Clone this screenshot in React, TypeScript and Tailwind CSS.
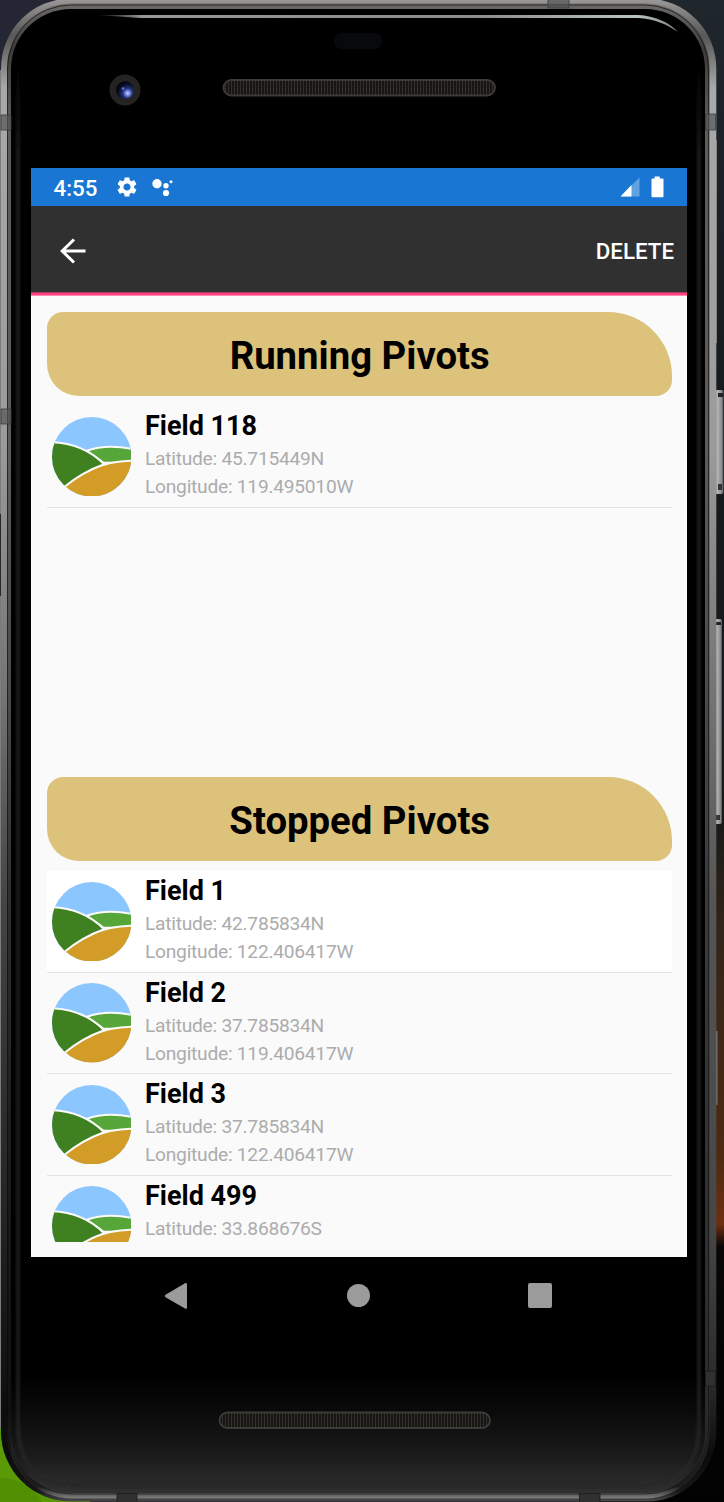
import React from "react";

type Field = { name: string; lat: string; lon?: string };

const running: Field[] = [{ name: "Field 118", lat: "45.715449N", lon: "119.495010W" }];

const stopped: Field[] = [
  { name: "Field 1", lat: "42.785834N", lon: "122.406417W" },
  { name: "Field 2", lat: "37.785834N", lon: "119.406417W" },
  { name: "Field 3", lat: "37.785834N", lon: "122.406417W" },
  { name: "Field 499", lat: "33.868676S" },
];

/** Drawing of the handset: wallpaper edges, metal rim, camera and speakers. */
function Handset() {
  return (
    <svg className="absolute inset-0" width="724" height="1502" viewBox="0 0 724 1502" aria-hidden="true">
      <defs>
        <linearGradient id="wallRight" x1="0" y1="0" x2="0" y2="1">
          <stop offset="0" stopColor="#1f262c" />
          <stop offset="0.3" stopColor="#151a1e" />
          <stop offset="0.54" stopColor="#171918" />
          <stop offset="0.62" stopColor="#33251a" />
          <stop offset="0.77" stopColor="#4d2a12" />
          <stop offset="0.815" stopColor="#6e2f10" />
          <stop offset="0.83" stopColor="#080607" />
          <stop offset="1" stopColor="#020202" />
        </linearGradient>
        <linearGradient id="rim" x1="0" y1="0" x2="0" y2="1">
          <stop offset="0" stopColor="#9c9a99" />
          <stop offset="0.025" stopColor="#585756" />
          <stop offset="0.06" stopColor="#a9a9a9" />
          <stop offset="0.3" stopColor="#9a9a9a" />
          <stop offset="0.45" stopColor="#777" />
          <stop offset="0.6" stopColor="#555" />
          <stop offset="0.82" stopColor="#464646" />
          <stop offset="0.92" stopColor="#2b2b2b" />
          <stop offset="0.97" stopColor="#0c0c0c" />
          <stop offset="0.993" stopColor="#161616" />
          <stop offset="1" stopColor="#4a4a4a" />
        </linearGradient>
        <linearGradient id="rimInner" x1="0" y1="0" x2="0" y2="1">
          <stop offset="0" stopColor="#6d6a68" />
          <stop offset="0.03" stopColor="#3c3b3a" />
          <stop offset="0.08" stopColor="#5c5c5c" />
          <stop offset="0.3" stopColor="#5c5c5c" />
          <stop offset="0.6" stopColor="#3b3b3b" />
          <stop offset="0.94" stopColor="#2b2b2b" />
          <stop offset="0.992" stopColor="#1c1c1c" />
          <stop offset="1" stopColor="#808080" />
        </linearGradient>
        <linearGradient id="leftShade" x1="0" y1="0" x2="0" y2="1">
          <stop offset="0.45" stopColor="#000" stopOpacity="0" />
          <stop offset="0.85" stopColor="#000" stopOpacity="0.55" />
          <stop offset="0.95" stopColor="#000" stopOpacity="0.6" />
          <stop offset="1" stopColor="#000" stopOpacity="0" />
        </linearGradient>
        <clipPath id="body">
          <rect x="1" y="-1.5" width="715.3" height="1503" rx="70" />
        </clipPath>
        <linearGradient id="glass" x1="0" y1="0" x2="0" y2="1">
          <stop offset="0.92" stopColor="#000" />
          <stop offset="0.945" stopColor="#0a0a0a" />
          <stop offset="0.975" stopColor="#1b1b1b" />
          <stop offset="1" stopColor="#303030" />
        </linearGradient>
        <linearGradient id="edgeGlow" gradientUnits="userSpaceOnUse" x1="0" y1="60" x2="0" y2="1486">
          <stop offset="0" stopColor="#222" stopOpacity="0" />
          <stop offset="0.07" stopColor="#222" />
          <stop offset="1" stopColor="#262626" />
        </linearGradient>
        <linearGradient id="shine" x1="0" y1="0" x2="1" y2="0">
          <stop offset="0" stopColor="#999" stopOpacity="0" />
          <stop offset="0.08" stopColor="#96989a" />
          <stop offset="0.65" stopColor="#8b8b8b" />
          <stop offset="0.93" stopColor="#bac3c4" />
          <stop offset="1" stopColor="#7d8383" />
        </linearGradient>
        <linearGradient id="button" x1="0" y1="0" x2="1" y2="0">
          <stop offset="0" stopColor="#777" />
          <stop offset="0.35" stopColor="#b5b5b5" />
          <stop offset="0.8" stopColor="#8b8b8b" />
          <stop offset="1" stopColor="#4e4e4e" />
        </linearGradient>
        <radialGradient id="lens" cx="0.65" cy="0.68" r="0.65">
          <stop offset="0" stopColor="#d0d8ff" />
          <stop offset="0.2" stopColor="#7486da" />
          <stop offset="0.42" stopColor="#22337c" />
          <stop offset="0.8" stopColor="#080c22" />
          <stop offset="1" stopColor="#05070f" />
        </radialGradient>
        <pattern id="mesh" width="3" height="2" patternUnits="userSpaceOnUse">
          <rect width="3" height="2" fill="#171613" />
          <rect width="1" height="1" fill="#383632" />
          <rect y="1" width="1" height="1" fill="#2c2a26" />
        </pattern>
        <filter id="soft" x="-20%" y="-20%" width="140%" height="140%">
          <feGaussianBlur stdDeviation="1.6" />
        </filter>
      </defs>

      <rect width="724" height="1502" fill="#171c21" />
      <rect width="90" height="70" fill="#242733" />
      <rect y="70" width="4" height="1358" fill="#7a7d80" />
      <rect y="514" width="3" height="82" fill="#25292d" />
      <rect x="600" width="124" height="1502" fill="url(#wallRight)" />
      <rect y="1428" width="90" height="74" fill="#5a9a06" />
      <path d="M0 1478q18 0 34 12l8 12H0z" fill="#4b8902" opacity="0.6" />

      <rect x="714" y="390" width="9.5" height="104" rx="2" fill="url(#button)" />
      <rect x="718" y="393" width="5" height="4" fill="#222" />
      <rect x="718" y="484" width="4" height="6" fill="#333" />
      <rect x="714" y="619" width="8" height="205" rx="2" fill="url(#button)" />
      <rect x="716" y="622" width="5" height="3" fill="#222" />
      <rect x="716" y="815" width="4" height="5" fill="#333" />
      <rect x="716" y="140" width="1" height="203" fill="#777" />
      <rect x="716" y="1031" width="1.5" height="74" fill="#777" />

      <rect x="1" y="-1.5" width="715.3" height="1503" rx="70" fill="url(#rim)" />
      <rect x="7" y="3.5" width="702.5" height="1495" rx="65" fill="url(#rimInner)" />
      <rect x="7.5" y="5" width="701" height="1489" rx="64" fill="none" stroke="#161616" strokeWidth="1" opacity="0.75" />
      <path d="M1 70H11V1480H1z" fill="url(#leftShade)" clipPath="url(#body)" />
      <rect x="11" y="9" width="694" height="1484" rx="60" fill="url(#glass)" />
      <path
        d="M18 60V1425Q18 1485 80 1485H640Q699 1485 699 1425V60"
        fill="none"
        stroke="url(#edgeGlow)"
        strokeWidth="3"
        filter="url(#soft)"
      />

      <path d="M96 15H638C655 16 669 22 678 32C666 24 655 19 638 18H140z" fill="url(#shine)" />

      <g fill="#555" fillOpacity="0.7" stroke="#3d3d3d" strokeWidth="0.8">
        <rect x="1" y="115" width="10" height="15" />
        <rect x="1" y="409" width="10" height="15" />
        <rect x="705.5" y="114" width="10" height="16" />
        <rect x="548" y="-1" width="21" height="9" />
      </g>
      <g fill="#303030" stroke="#1c1c1c" strokeWidth="0.8">
        <rect x="117" y="1493.5" width="20" height="9" />
        <rect x="579.5" y="1493.5" width="20.5" height="9" />
        <rect x="705.5" y="1371" width="10" height="15" />
      </g>

      <rect x="334" y="33" width="48.5" height="16" rx="8" fill="#08090c" />
      <circle cx="125" cy="90" r="15.5" fill="#242322" />
      <circle cx="125" cy="90" r="14" fill="none" stroke="#2b2928" strokeDasharray="1.5 1.5" />
      <circle cx="125" cy="90" r="9" fill="url(#lens)" />
      <circle cx="123" cy="88.5" r="1.3" fill="#5f76c4" />

      <rect x="223.5" y="80" width="271.5" height="15.5" rx="7.75" fill="url(#mesh)" stroke="#3d3b39" strokeWidth="1.8" />
      <rect x="219.5" y="1412.5" width="270.5" height="15.5" rx="7.75" fill="url(#mesh)" stroke="#3d3b39" strokeWidth="1.8" />
    </svg>
  );
}

function FieldIcon({ id }: { id: string }) {
  return (
    <svg className="mt-[10.5px] ml-[4.3px] h-[79.5px] w-[79.5px] shrink-0" viewBox="0 0 80 80" aria-hidden="true">
      <clipPath id={id}>
        <circle cx="40" cy="40" r="40" />
      </clipPath>
      <g clipPath={`url(#${id})`}>
        <rect width="80" height="80" fill="#8cc6ff" />
        <path d="M35 34C49 29 65 29 82 32.5V46H52z" fill="#57a639" stroke="#fafafa" strokeWidth="2" />
        <path d="M10 71.5C27 58 48 43.5 83 44V83H10z" fill="#d39c26" stroke="#fafafa" strokeWidth="2" />
        <path d="M-2 25.3C19 25.5 38 33 52.5 47.5C37 53 25 60 13 70L-2 82z" fill="#3f8021" stroke="#fafafa" strokeWidth="2" />
      </g>
    </svg>
  );
}

function FieldRow({ field, id, selected }: { field: Field; id: string; selected?: boolean }) {
  return (
    <div className={`flex h-[101.5px] shrink-0 border-b border-[#e4e4e4] ${selected ? "bg-white" : ""}`}>
      <FieldIcon id={id} />
      <div className="ml-[13.8px] pt-[4px] whitespace-nowrap">
        <div className="text-[27px] leading-[33px] font-bold text-black">{field.name}</div>
        <div className="mt-[2px] text-[19.2px] leading-[28px] tracking-[-0.25px] text-[#acacac]">
          <div>Latitude: {field.lat}</div>
          {field.lon && <div>Longitude: {field.lon}</div>}
        </div>
      </div>
    </div>
  );
}

function SectionHeader({ children }: { children: React.ReactNode }) {
  return (
    <h2 className="flex h-[84px] shrink-0 items-center justify-center rounded-tl-[16px] rounded-tr-[64px] rounded-br-[16px] rounded-bl-[32px] bg-[#dcc27a] pt-[4px] text-[38.3px] font-bold text-black">
      {children}
    </h2>
  );
}

function StatusBar() {
  return (
    <div className="flex h-[38px] items-center bg-[#1976d2] pr-[23px] pl-[22.5px] text-white">
      <span className="mt-[3px] w-[62px] text-[22.3px] leading-none font-medium">4:55</span>
      <svg className="-ml-px h-[24px] w-[24px]" viewBox="0 0 24 24" fill="currentColor">
        <path d="M19.14 12.94c.04-.3.06-.61.06-.94 0-.32-.02-.64-.07-.94l2.03-1.58c.18-.14.23-.41.12-.61l-1.92-3.32c-.12-.22-.37-.29-.59-.22l-2.39.96c-.5-.38-1.03-.7-1.62-.94l-.36-2.54c-.04-.24-.24-.41-.48-.41h-3.84c-.24 0-.43.17-.47.41l-.36 2.54c-.59.24-1.13.57-1.62.94l-2.39-.96c-.22-.08-.47 0-.59.22L2.74 8.87c-.12.21-.08.47.12.61l2.03 1.58c-.05.3-.09.63-.09.94s.02.64.07.94l-2.03 1.58c-.18.14-.23.41-.12.61l1.92 3.32c.12.22.37.29.59.22l2.39-.96c.5.38 1.03.7 1.62.94l.36 2.54c.05.24.24.41.48.41h3.84c.24 0 .44-.17.47-.41l.36-2.54c.59-.24 1.13-.56 1.62-.94l2.39.96c.22.08.47 0 .59-.22l1.92-3.32c.12-.22.07-.47-.12-.61l-2.01-1.58zM12 15.6c-1.98 0-3.6-1.62-3.6-3.6s1.62-3.6 3.6-3.6 3.6 1.62 3.6 3.6-1.62 3.6-3.6 3.6z" />
      </svg>
      <svg className="ml-[13px] h-[20px] w-[22px]" viewBox="0 0 22 20" fill="currentColor">
        <circle cx="5" cy="6.8" r="4.7" />
        <circle cx="14" cy="8.8" r="2.7" />
        <circle cx="14" cy="16" r="3.1" />
        <circle cx="19" cy="4.8" r="1.5" />
      </svg>
      <svg className="ml-auto h-[20px] w-[20px]" viewBox="0 0 20 20" fill="currentColor">
        <path d="M0.5 19.5L19.5 0.5V19.5z" opacity="0.32" />
        <path d="M0.5 19.5L11.5 8V19.5z" />
      </svg>
      <svg className="ml-[11px] h-[22px] w-[13px]" viewBox="0 0 13 22" fill="currentColor">
        <path d="M3.7 .6h5v2h2.8q1 0 1 .9v16.7q0 1-1 1H1.5q-1 0-1-1V3.5Q.5 2.6 1.5 2.6h2.2z" />
      </svg>
    </div>
  );
}

function NavBar() {
  return (
    <div className="flex h-[77px] items-center bg-black pl-[132px]">
      <svg className="h-[28px] w-[26px]" viewBox="0 0 26 28" fill="#9b9b9b">
        <path d="M2.5 12.7L22 1.3Q24 .5 24 2.5V25.5Q24 27.5 22 26.4L2.5 15.3Q1 14 2.5 12.7z" />
      </svg>
      <div className="ml-[158px] h-[23px] w-[23px] rounded-full bg-[#9b9b9b]" />
      <div className="ml-[158px] h-[24.5px] w-[24px] rounded-[2px] bg-[#9b9b9b]" />
    </div>
  );
}

export default function App() {
  return (
    <div className="relative h-[1502px] w-[724px] overflow-hidden bg-black font-['Roboto',sans-serif]">
      <Handset />
      <div className="relative pt-[168px] pl-[31px]">
        <div className="w-[656px]">
          <StatusBar />
          <div className="flex h-[86px] items-center justify-between bg-[#303030] pr-[13px] pl-[29px] text-white">
            <svg className="mt-[3px] h-[26px] w-[26px]" viewBox="0 0 26 26" fill="none" stroke="currentColor" strokeWidth="3">
              <path d="M25.5 13H2.5M14 1.5L2.2 13L14 24.5" />
            </svg>
            <span className="mt-[4px] text-[22.3px] leading-none font-medium">DELETE</span>
          </div>
          <div className="h-[4px] border-t border-b border-t-[#b23a60] border-b-[#ff8ab1] bg-[#ff4081]" />
          <main className="flex h-[961px] flex-col bg-[#fafafa] pt-[16px] pr-[15px] pl-[16.4px]">
            <SectionHeader>Running Pivots</SectionHeader>
            <div className="mt-[10px] flex h-[371px] shrink-0 flex-col">
              {running.map((f, i) => (
                <FieldRow key={f.name} field={f} id={`running-${i}`} />
              ))}
            </div>
            <SectionHeader>Stopped Pivots</SectionHeader>
            <div className="mt-[10px] flex h-[371px] shrink-0 flex-col overflow-hidden">
              {stopped.map((f, i) => (
                <FieldRow key={f.name} field={f} id={`stopped-${i}`} selected={i === 0} />
              ))}
            </div>
          </main>
          <NavBar />
        </div>
      </div>
    </div>
  );
}
